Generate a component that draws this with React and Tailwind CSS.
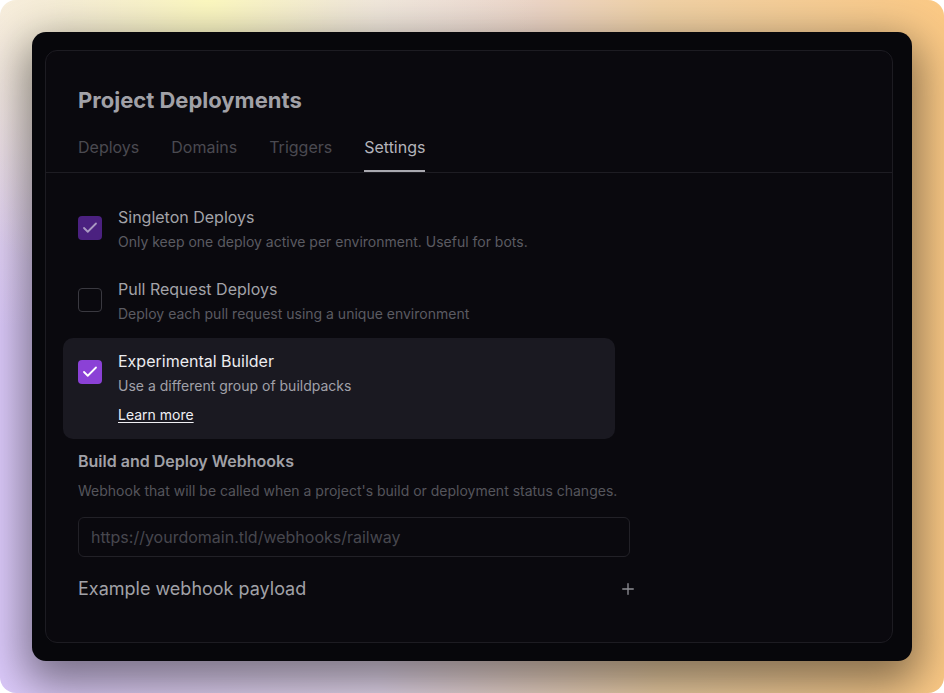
import React, { useState } from "react";
import { Check, Plus } from "lucide-react";

const tabs = ["Deploys", "Domains", "Triggers", "Settings"];

const Option = ({ title, desc, checked, dim, active, link }) => (
  <div
    className={`-mx-[15px] flex w-[552px] items-start gap-4 rounded-[10px] px-[15px] pt-[11px] pb-[14px] ${
      active ? "bg-[#1a1921]" : ""
    }`}
  >
    {checked ? (
      <div
        className={`mt-[11px] flex h-6 w-6 shrink-0 items-center justify-center rounded-[4px] ${
          dim ? "bg-[#4b2180] text-[#a999c2]" : "bg-[#8b41d6] text-white"
        }`}
      >
        <Check size={18} strokeWidth={2.4} />
      </div>
    ) : (
      <div className="mt-[11px] h-6 w-6 shrink-0 rounded-[4px] border border-[#3a3940]" />
    )}
    <div className="flex flex-col">
      <div className={`text-base leading-6 ${active ? "text-[#ececf0]" : "text-[#a3a3a9]"}`}>{title}</div>
      <div className={`mt-[3px] text-sm leading-5 ${active ? "text-[#a1a1a9]" : "text-[#5b5b62]"}`}>{desc}</div>
      {link && (
        <a href="#" className="mt-[9px] text-sm leading-5 text-[#f0f0f4] underline underline-offset-2">
          {link}
        </a>
      )}
    </div>
  </div>
);

const App = () => {
  const [tab, setTab] = useState("Settings");
  return (
    <div className="h-[693px] w-[944px] bg-white font-['Inter',sans-serif]">
      <div className="h-[693px] w-[944px] overflow-hidden rounded-[16px] bg-[radial-gradient(ellipse_at_22%_0%,#fdf9c0_0%,rgba(253,249,192,0.5)_14%,transparent_32%),radial-gradient(circle_at_0%_0%,#f4e8ea_0%,transparent_28%),linear-gradient(90deg,#dccafb_0%,#e8dbf1_40%,#f1d2a6_70%,#fbc985_100%)] p-8">
        <div className="h-[629px] rounded-[14px] bg-[#07070b] pt-[18px] pr-[19px] pl-[13px] shadow-[0_16px_44px_8px_rgba(0,0,0,0.45)]">
          <div className="h-[593px] rounded-[12px] border border-[#1d1c22] bg-[#0a090e]">
            <div className="border-b border-[#1e1d23] px-[32px] pt-[35px]">
              <h1 className="text-[22px] leading-7 font-bold text-[#a1a1a7]">Project Deployments</h1>
              <nav className="mt-[21px] flex gap-8">
                {tabs.map((t) => (
                  <button
                    key={t}
                    onClick={() => setTab(t)}
                    className={`border-b-2 pb-[11px] text-base leading-6 ${
                      tab === t ? "border-[#a9a9b0] text-[#b4b4bb]" : "border-transparent text-[#4a4a51]"
                    }`}
                  >
                    {t}
                  </button>
                ))}
              </nav>
            </div>

            <div className="px-[32px] pt-[21px]">
              <Option
                title="Singleton Deploys"
                desc="Only keep one deploy active per environment. Useful for bots."
                checked
                dim
              />
              <Option title="Pull Request Deploys" desc="Deploy each pull request using a unique environment" />
              <Option
                title="Experimental Builder"
                desc="Use a different group of buildpacks"
                checked
                active
                link="Learn more"
              />

              <h2 className="mt-[10px] text-base leading-6 font-semibold text-[#a1a1a7]">Build and Deploy Webhooks</h2>
              <p className="mt-2 text-sm leading-5 text-[#55555c]">
                Webhook that will be called when a project's build or deployment status changes.
              </p>
              <input
                type="text"
                placeholder="https://yourdomain.tld/webhooks/railway"
                className="mt-4 h-10 w-[552px] rounded-[6px] border border-[#222127] bg-transparent px-3 text-base text-[#a1a1a7] outline-none placeholder:text-[#47474e]"
              />
              <div className="mt-[18px] flex w-[559px] items-center justify-between">
                <span className="text-lg leading-7 text-[#a1a1a7]">Example webhook payload</span>
                <Plus size={18} strokeWidth={1.8} className="text-[#8e8e94]" />
              </div>
            </div>
          </div>
        </div>
      </div>
    </div>
  );
};

export default App;
